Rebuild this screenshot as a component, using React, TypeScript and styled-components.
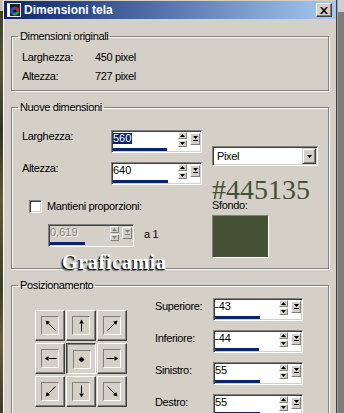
import React from "react";
import styled, { createGlobalStyle, css } from "styled-components";

const GlobalStyle = createGlobalStyle`
  *, *::before, *::after { box-sizing: border-box; }
  html, body {
    margin: 0;
    padding: 0;
    overflow: hidden;
    background: #d4d0c8;
  }
  body {
    font-family: "Liberation Sans", Arial, sans-serif;
    font-size: 11px;
    letter-spacing: -0.35px;
    color: #000;
  }
`;

const raised = css`
  border: 1px solid;
  border-color: #fff #404040 #404040 #fff;
  box-shadow: inset -1px -1px 0 #808080;
  background: #d4d0c8;
`;

const sunken = css`
  border: 1px solid;
  border-color: #808080 #fff #fff #808080;
  box-shadow: inset 1px 1px 0 #404040, inset -1px -1px 0 #d4d0c8;
`;

const Page = styled.div`
  display: flex;
  width: 344px;
  height: 413px;
  overflow: hidden;
`;

const Backdrop = styled.div<{ $side: "left" | "right" }>`
  flex: none;
  ${(p) =>
    p.$side === "left"
      ? css`
          width: 3px;
          background: linear-gradient(
            180deg,
            #c4c2b8 0 11px,
            #3e4128 11px,
            #55553a 70px,
            #2f3320 130px,
            #5f5836 200px,
            #3a3d24 290px,
            #6a5a3a 340px,
            #3b3a24 413px
          );
        `
      : css`
          width: 7px;
          border-left: 1px solid #a0a0a0;
          background: linear-gradient(180deg, #cfcfcf 0 12px, #7c7c7c 12px);
        `}
`;

const Window = styled.div`
  flex: 1;
  min-width: 0;
  display: flex;
  flex-direction: column;
  padding-top: 1px;
  border-left: 1px solid #fff;
  border-right: 1px solid #404040;
  background: #d4d0c8;
`;

const TitleBar = styled.div`
  flex: none;
  height: 18px;
  display: flex;
  align-items: center;
  gap: 3px;
  padding: 0 4px 0 3px;
  background: linear-gradient(90deg, #0a246a 0%, #a6caf0 100%);
  color: #fff;
  font-size: 12px;
  font-weight: bold;
  letter-spacing: 0;
`;

const TitleText = styled.span`
  flex: 1;
  line-height: 18px;
`;

const CloseButton = styled.div`
  ${raised};
  width: 16px;
  height: 14px;
  display: flex;
  align-items: center;
  justify-content: center;
`;

const Content = styled.div`
  display: flex;
  flex-direction: column;
  gap: 10px;
  padding: 11px 7px 0;
`;

const Group = styled.fieldset<{ $pad: string }>`
  position: relative;
  margin: 0;
  min-width: 0;
  padding: ${(p) => p.$pad};
  border: 1px solid #808080;
  box-shadow: inset 1px 1px 0 #fff, 1px 1px 0 #fff;
`;

const Legend = styled.legend`
  margin-left: -4px;
  padding: 0 2px;
  line-height: 13px;
`;

const InfoRow = styled.div`
  display: grid;
  grid-template-columns: 73px auto;
  line-height: 19px;
`;

const DimGrid = styled.div`
  display: grid;
  grid-template-columns: 190px 106px;
  align-items: start;
`;

const Column = styled.div`
  display: flex;
  flex-direction: column;
`;

const FieldRow = styled.div<{ $labelWidth: number; $labelTop: number; $gap?: number }>`
  display: grid;
  grid-template-columns: ${(p) => p.$labelWidth}px auto;
  align-items: start;
  margin-top: ${(p) => p.$gap ?? 0}px;
  > span {
    line-height: 13px;
    margin-top: ${(p) => p.$labelTop}px;
  }
`;

const CheckRow = styled.label`
  display: flex;
  align-items: center;
  gap: 5px;
  margin-top: 15px;
  padding-left: 7px;
  line-height: 13px;
`;

const CheckBox = styled.span`
  ${sunken};
  width: 13px;
  height: 13px;
  background: #fff;
`;

const RatioRow = styled.div`
  display: flex;
  align-items: flex-start;
  gap: 10px;
  margin-top: 11px;
  padding-left: 26px;
  > span {
    line-height: 13px;
    margin-top: 4px;
  }
`;

const SpinFrame = styled.div<{ $w: number; $disabled?: boolean }>`
  ${sunken};
  width: ${(p) => p.$w}px;
  height: 23px;
  padding: 1px;
  display: flex;
  flex-direction: column;
  background: ${(p) => (p.$disabled ? "#d4d0c8" : "#fff")};
`;

const SpinTop = styled.div`
  height: 15px;
  display: flex;
  align-items: flex-start;
`;

const SpinValue = styled.div<{ $selected?: boolean; $disabled?: boolean }>`
  flex: 1;
  letter-spacing: 0;
  > span {
    display: inline-block;
    line-height: 11px;
    height: 11px;
    padding: 0 1px 0 0;
    ${(p) =>
      p.$selected &&
      css`
        background: #0a246a;
        color: #fff;
      `}
    ${(p) =>
      p.$disabled &&
      css`
        color: #808080;
        text-shadow: 1px 1px 0 #fff;
      `}
  }
`;

const Spinner = styled.div`
  width: 9px;
  display: flex;
  flex-direction: column;
  gap: 1px;
`;

const SpinStep = styled.div`
  height: 7px;
  display: flex;
  align-items: center;
  justify-content: center;
  border: 1px solid;
  border-color: #fff #808080 #808080 #fff;
  background: #d4d0c8;
`;

const SpinDrop = styled.div`
  width: 10px;
  height: 12px;
  margin: 1px 0 0 3px;
  display: flex;
  align-items: center;
  justify-content: center;
  border: 1px solid;
  border-color: #fff #808080 #808080 #fff;
  background: #d4d0c8;
`;

const Bar = styled.div`
  height: 3px;
  margin-top: auto;
  background: #0a246a;
`;

const Select = styled.div`
  ${sunken};
  width: 106px;
  height: 20px;
  margin-top: 16px;
  padding: 1px;
  display: flex;
  align-items: center;
  background: #fff;
`;

const SelectText = styled.span`
  flex: 1;
  padding-left: 3px;
  line-height: 16px;
`;

const SelectButton = styled.div`
  width: 14px;
  height: 16px;
  display: flex;
  align-items: center;
  justify-content: center;
  border: 1px solid;
  border-color: #d4d0c8 #404040 #404040 #d4d0c8;
  box-shadow: inset 1px 1px 0 #fff, inset -1px -1px 0 #808080;
  background: #d4d0c8;
`;

const HexMark = styled.div`
  margin-top: 14px;
  font-family: "Liberation Serif", "Times New Roman", serif;
  font-size: 28px;
  line-height: 20px;
  letter-spacing: 0;
  color: #445135;
`;

const SmallLabel = styled.span`
  margin-top: -1px;
  line-height: 13px;
`;

const Swatch = styled.div<{ $color: string }>`
  width: 57px;
  height: 43px;
  margin-top: 3px;
  border: 1px solid;
  border-color: #808080 #fff #fff #808080;
  background: ${(p) => p.$color};
`;

const Watermark = styled.div`
  position: absolute;
  left: 50px;
  bottom: -4px;
  font-family: "Liberation Serif", "Times New Roman", serif;
  font-weight: bold;
  font-size: 20px;
  line-height: 20px;
  letter-spacing: 0.7px;
  color: #fff;
  text-shadow: -1px 1px 0 #111, -2px 2px 1px rgba(0, 0, 0, 0.45);
`;

const PosLayout = styled.div`
  display: flex;
  align-items: flex-start;
`;

const PosGrid = styled.div`
  display: grid;
  grid-template-columns: repeat(3, 30px);
  grid-auto-rows: 31px;
  gap: 2px 1px;
  margin: 12px 0 0 13px;
`;

const PosButton = styled.div<{ $pressed?: boolean }>`
  display: flex;
  align-items: center;
  justify-content: center;
  border: 1px solid;
  background: #d4d0c8;
  ${(p) =>
    p.$pressed
      ? css`
          border-color: #404040 #fff #fff #404040;
          box-shadow: inset 1px 1px 0 #808080;
          padding: 1px 0 0 1px;
        `
      : css`
          border-color: #fff #404040 #404040 #fff;
          box-shadow: inset -1px -1px 0 #808080;
        `}
`;

const PosInner = styled.div`
  width: 18px;
  height: 19px;
  display: flex;
  align-items: center;
  justify-content: center;
  border: 1px solid;
  border-color: #808080 #fff #fff #808080;
`;

const MarginList = styled.div`
  display: flex;
  flex-direction: column;
  gap: 9px;
  margin-left: 28px;
`;

const Tri = ({ down, color = "#000" }: { down?: boolean; color?: string }) => (
  <svg width="5" height="3" viewBox="0 0 5 3">
    <path d={down ? "M0 0H5L2.5 3Z" : "M0 3H5L2.5 0Z"} fill={color} />
  </svg>
);

const DropGlyph = ({ color = "#000" }: { color?: string }) => (
  <svg width="5" height="6" viewBox="0 0 5 6">
    <path d="M0 0H5L2.5 3Z" fill={color} />
    <rect x="0" y="4" width="5" height="1" fill={color} />
  </svg>
);

const ArrowIcon = ({ dx, dy }: { dx: number; dy: number }) => {
  const c = 6.5;
  if (!dx && !dy) {
    return (
      <svg width="13" height="13" viewBox="0 0 13 13">
        <path d="M6.5 3.5L9.5 6.5L6.5 9.5L3.5 6.5Z" fill="#000" />
      </svg>
    );
  }
  const diag = dx !== 0 && dy !== 0;
  const r = diag ? 5 : 6;
  const len = Math.hypot(dx, dy);
  const ux = dx / len;
  const uy = dy / len;
  const hx = c + dx * r;
  const hy = c + dy * r;
  const tx = c - dx * r;
  const ty = c - dy * r;
  const bx = hx - ux * 4;
  const by = hy - uy * 4;
  const w = 2.2;
  return (
    <svg width="13" height="13" viewBox="0 0 13 13">
      <line x1={tx} y1={ty} x2={bx} y2={by} stroke="#000" strokeWidth="1" />
      <path d={`M${hx} ${hy}L${bx - uy * w} ${by + ux * w}L${bx + uy * w} ${by - ux * w}Z`} fill="#000" />
    </svg>
  );
};

const AppIcon = () => (
  <svg width="14" height="14" viewBox="0 0 14 14">
    <rect x="0.5" y="0.5" width="13" height="13" fill="#1b2233" stroke="#e8e8e8" />
    <rect x="1" y="1" width="2" height="12" fill="#fff" />
    <circle cx="8" cy="8" r="4.5" fill="#0f1420" />
    <path d="M8 8L8 3.5A4.5 4.5 0 0 1 12.3 9.2Z" fill="#d02020" />
    <path d="M8 8L12.3 9.2A4.5 4.5 0 0 1 5 11.4Z" fill="#20a040" />
    <path d="M8 8L5 11.4A4.5 4.5 0 0 1 8 3.5Z" fill="#2050d0" />
    <circle cx="8" cy="8" r="1.6" fill="#0a0a0a" />
  </svg>
);

const CloseGlyph = () => (
  <svg width="8" height="7" viewBox="0 0 8 7">
    <path d="M0 0H2L4 2.5L6 0H8L5 3.5L8 7H6L4 4.5L2 7H0L3 3.5Z" fill="#000" />
  </svg>
);

type SpinProps = {
  value: string;
  bar: number;
  width?: number;
  selected?: boolean;
  disabled?: boolean;
};

const SpinBox = ({ value, bar, width = 91, selected, disabled }: SpinProps) => {
  const glyph = disabled ? "#808080" : "#000";
  return (
    <SpinFrame $w={width} $disabled={disabled}>
      <SpinTop>
        <SpinValue $selected={selected} $disabled={disabled}>
          <span>{value}</span>
        </SpinValue>
        <Spinner>
          <SpinStep><Tri color={glyph} /></SpinStep>
          <SpinStep><Tri down color={glyph} /></SpinStep>
        </Spinner>
        <SpinDrop><DropGlyph color={glyph} /></SpinDrop>
      </SpinTop>
      <Bar style={{ width: bar }} />
    </SpinFrame>
  );
};

const directions = [
  [-1, -1], [0, -1], [1, -1],
  [-1, 0], [0, 0], [1, 0],
  [-1, 1], [0, 1], [1, 1],
];

const margins = [
  { label: "Superiore:", value: "-43", bar: 45 },
  { label: "Inferiore:", value: "-44", bar: 44 },
  { label: "Sinistro:", value: "55", bar: 45 },
  { label: "Destro:", value: "55", bar: 45 },
];

const App = () => {
  return (
    <Page>
      <GlobalStyle />
      <Backdrop $side="left" />
      <Window>
        <TitleBar>
          <AppIcon />
          <TitleText>Dimensioni tela</TitleText>
          <CloseButton><CloseGlyph /></CloseButton>
        </TitleBar>
        <Content>
          <Group $pad="5px 10px 4px">
            <Legend>Dimensioni originali</Legend>
            <InfoRow><span>Larghezza:</span><span>450 pixel</span></InfoRow>
            <InfoRow><span>Altezza:</span><span>727 pixel</span></InfoRow>
          </Group>

          <Group $pad="16px 10px 10px">
            <Legend>Nuove dimensioni</Legend>
            <DimGrid>
              <Column>
                <FieldRow $labelWidth={89} $labelTop={0}>
                  <span>Larghezza:</span>
                  <SpinBox value="560" bar={54} selected />
                </FieldRow>
                <FieldRow $labelWidth={89} $labelTop={0} $gap={9}>
                  <span>Altezza:</span>
                  <SpinBox value="640" bar={55} />
                </FieldRow>
                <CheckRow>
                  <CheckBox />
                  <span>Mantieni proporzioni:</span>
                </CheckRow>
                <RatioRow>
                  <SpinBox value="0,619" bar={35} width={86} disabled />
                  <span>a 1</span>
                </RatioRow>
              </Column>
              <Column>
                <Select>
                  <SelectText>Pixel</SelectText>
                  <SelectButton><Tri down /></SelectButton>
                </Select>
                <HexMark>#445135</HexMark>
                <SmallLabel>Sfondo:</SmallLabel>
                <Swatch $color="#445135" />
              </Column>
            </DimGrid>
            <Watermark>Graficamia</Watermark>
          </Group>

          <Group $pad="6px 10px 20px">
            <Legend>Posizionamento</Legend>
            <PosLayout>
              <PosGrid>
                {directions.map(([dx, dy]) => (
                  <PosButton key={`${dx}${dy}`} $pressed={!dx && !dy}>
                    <PosInner><ArrowIcon dx={dx} dy={dy} /></PosInner>
                  </PosButton>
                ))}
              </PosGrid>
              <MarginList>
                {margins.map((m) => (
                  <FieldRow key={m.label} $labelWidth={58} $labelTop={2}>
                    <span>{m.label}</span>
                    <SpinBox value={m.value} bar={m.bar} width={90} />
                  </FieldRow>
                ))}
              </MarginList>
            </PosLayout>
          </Group>
        </Content>
      </Window>
      <Backdrop $side="right" />
    </Page>
  );
};

export default App;
